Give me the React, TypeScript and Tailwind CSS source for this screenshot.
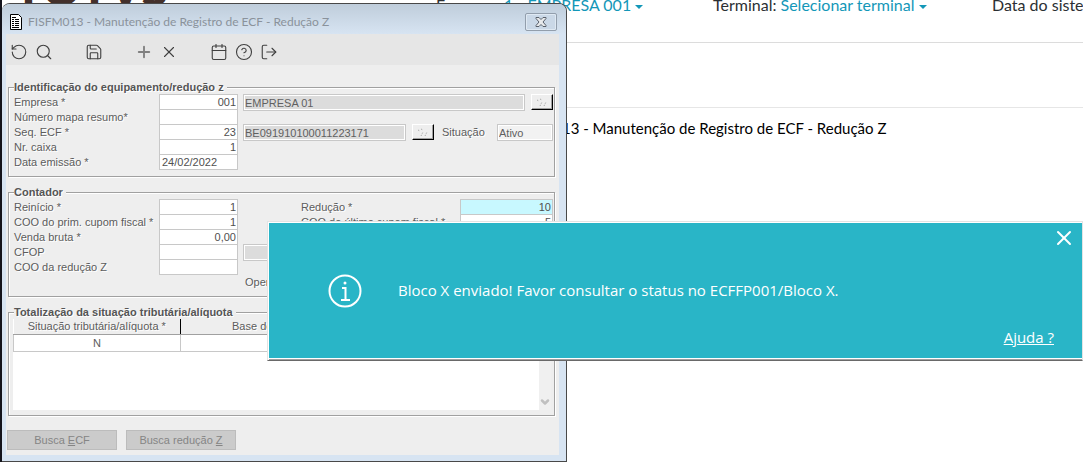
import { useState, type ReactNode } from "react";
import { Calendar, ChevronDown, CircleHelp, LogOut, Plus, RotateCcw, Save, Search, X } from "lucide-react";

const fieldClass =
  "block h-4 w-full border border-[#c8c8c8] pl-[2px] pr-px text-[11px] leading-[14px] text-[#505050] outline-none";

const displayClass =
  "block h-[17px] min-w-0 border border-[#c8c8c8] px-px text-[11px] leading-[15px] text-[#606060] outline outline-1 -outline-offset-2 outline-white";

const labelClass = "leading-4 [text-shadow:1px_1px_#fff]";

function Group({ title, children }: { title: string; children: ReactNode }) {
  return (
    <fieldset className="min-w-0 border border-[#a0a0a0] pr-px pl-[5px] shadow-[1px_1px_0_#fff,inset_1px_1px_0_#fff]">
      <legend className="bg-[#eee] pr-[3px] text-[11px] leading-[13px] font-bold text-[#555] [text-shadow:1px_1px_#fff]">
        {title}
      </legend>
      {children}
    </fieldset>
  );
}

type RowProps = {
  id: string;
  label: string;
  value?: string;
  align?: "left" | "right";
  children?: ReactNode;
};

function Row({ id, label, value = "", align = "right", children }: RowProps) {
  return (
    <div className="flex h-[15px] items-start">
      <label htmlFor={id} className={`w-[145px] shrink-0 ${labelClass}`}>
        {label}
      </label>
      <div className="w-[79px] shrink-0">
        <input id={id} defaultValue={value} className={`${fieldClass} bg-white ${align === "right" ? "text-right" : ""}`} />
      </div>
      {children}
    </div>
  );
}

function LookupButton({ label }: { label: string }) {
  return (
    <button
      type="button"
      aria-label={label}
      className="ml-[6px] grid h-4 w-[22px] shrink-0 place-items-center border border-t-white border-r-black border-b-black border-l-white bg-[#eee] shadow-[inset_-1px_-1px_0_#a0a0a0]"
    >
      <svg width="12" height="9" viewBox="0 0 12 9" stroke="#a0a0a0" fill="none" strokeDasharray="1 1">
        <path d="M1 2l2 1M4 1l2 1M4 8l2-4M8 8l2-4" />
      </svg>
    </button>
  );
}

function ToolButton({ label, gap = "", children }: { label: string; gap?: string; children: ReactNode }) {
  return (
    <button type="button" aria-label={label} className={`grid size-[25px] place-items-center ${gap}`}>
      {children}
    </button>
  );
}

function Toolbar() {
  const icon = { size: 18, strokeWidth: 1.5 };

  return (
    <div className="flex h-[31px] items-center bg-[#e6e6e6] pt-1 text-[#404040]">
      <ToolButton label="Desfazer"><RotateCcw {...icon} /></ToolButton>
      <ToolButton label="Pesquisar"><Search {...icon} /></ToolButton>
      <ToolButton label="Salvar" gap="ml-[25px]"><Save {...icon} /></ToolButton>
      <ToolButton label="Adicionar" gap="ml-[25px]"><Plus size={18} strokeWidth={2.5} className="text-[#808080]" /></ToolButton>
      <ToolButton label="Excluir"><X {...icon} /></ToolButton>
      <ToolButton label="Calendário" gap="ml-[25px]"><Calendar {...icon} /></ToolButton>
      <ToolButton label="Ajuda"><CircleHelp {...icon} /></ToolButton>
      <ToolButton label="Sair"><LogOut {...icon} /></ToolButton>
    </div>
  );
}

function RegistroWindow() {
  return (
    <section className="absolute top-[3px] left-0 w-[565px] overflow-hidden rounded-t-lg border border-l-0 border-[#484848] bg-[#d7e4f2] font-['Liberation_Sans',Arial,sans-serif] text-[11px] text-[#5c5c5c]">
      <header className="flex h-[30px] items-center bg-linear-to-b from-[#bfcddb] to-[#d7e4f2] pt-2 pr-[9px] pb-[2px] pl-2">
        <svg width="12" height="16" viewBox="0 0 12 16">
          <path d="M.5.5h8l3 3v12H.5z" fill="#fff" stroke="#000" />
          <path d="M2 3.5h4M2 5.5h2M5 5.5h4M2 7.5h2M5 7.5h4M2 9.5h2M5 9.5h4M2 11.5h2M5 11.5h4M2 13.5h7" stroke="#000" />
        </svg>
        <h1 className="ml-[6px] flex-1 font-['Lato',sans-serif] text-xs text-[#8a929b]">
          FISFM013 - Manutenção de Registro de ECF - Redução Z
        </h1>
        <button
          type="button"
          aria-label="Fechar"
          className="grid h-[18px] w-8 place-items-center rounded-xs border border-[#929eac] bg-[#cad8e7] shadow-[inset_0_0_0_1px_#dfe9f3]"
        >
          <svg width="12" height="10" viewBox="0 0 12 10">
            <path d="M1 .5h3l2 2 2-2h3v1L8 5l3 3.500v1H8l-2-2-2 2H1v-1L4 5 1 1.500z" fill="#e8eaec" stroke="#59606b" />
          </svg>
        </button>
      </header>

      <div className="mr-[7px] mb-[6px] ml-[4px] bg-[#eee]">
        <Toolbar />
        <div className="pt-4 pr-1 pb-[5px] pl-[2px]">
          <Group title="Identificação do equipamento/redução z">
            <div className="pb-[7px]">
              <Row id="empresa" label="Empresa *" value="001">
                <input aria-label="Nome da empresa" readOnly value="EMPRESA 01" className={`${displayClass} ml-[5px] flex-1 bg-[#dcdcdc]`} />
                <LookupButton label="Buscar empresa" />
              </Row>
              <Row id="mapa" label="Número mapa resumo*" />
              <Row id="seq" label="Seq. ECF *" value="23">
                <input aria-label="Número de série" readOnly value="BE091910100011223171" className={`${displayClass} ml-[5px] flex-1 bg-[#dcdcdc]`} />
                <LookupButton label="Buscar ECF" />
                <label htmlFor="situacao" className={`ml-2 w-[55px] ${labelClass}`}>
                  Situação
                </label>
                <input id="situacao" readOnly value="Ativo" className={`${displayClass} w-14 bg-[#f2f2f2]`} />
              </Row>
              <Row id="caixa" label="Nr. caixa" value="1" />
              <Row id="emissao" label="Data emissão *" value="24/02/2022" align="left" />
            </div>
          </Group>

          <div className="mt-[9px]">
            <Group title="Contador">
              <div className="pb-[7px]">
                <Row id="reinicio" label="Reinício *" value="1">
                  <label htmlFor="reducao" className={`ml-[63px] flex-1 ${labelClass}`}>
                    Redução *
                  </label>
                  <div className="w-[93px]">
                    <input id="reducao" defaultValue="10" className={`${fieldClass} bg-[#c8f8ff] text-right`} />
                  </div>
                </Row>
                <Row id="primcupom" label="COO do prim. cupom fiscal *" value="1">
                  <label htmlFor="ultcupom" className={`ml-[63px] flex-1 ${labelClass}`}>
                    COO do último cupom fiscal *
                  </label>
                  <div className="w-[93px]">
                    <input id="ultcupom" defaultValue="5" className={`${fieldClass} bg-white text-right`} />
                  </div>
                </Row>
                <Row id="venda" label="Venda bruta *" value="0,00" />
                <Row id="cfop" label="CFOP">
                  <input aria-label="Descrição do CFOP" readOnly className={`${displayClass} ml-[5px] flex-1 bg-[#dcdcdc]`} />
                </Row>
                <Row id="cooreducao" label="COO da redução Z" />
                <p className={`ml-[231px] h-[15px] ${labelClass}`}>Operador</p>
              </div>
            </Group>
          </div>

          <div className="mt-[9px]">
            <Group title="Totalização da situação tributária/alíquota">
              <div className="-ml-px mr-[2px] mb-[5px] flex h-[91px] bg-white">
                <div className="flex-1">
                  <table className="w-full table-fixed border-collapse">
                    <thead>
                      <tr className="h-[15px] bg-[#eee] leading-[14px] [text-shadow:1px_1px_#fff]">
                        <th className="w-[167px] border-r border-b border-r-black border-b-[#a0a0a0] p-0 font-normal">
                          Situação tributária/alíquota *
                        </th>
                        <th className="border-b border-[#a0a0a0] p-0 pl-[51px] text-left font-normal">Base de cálculo</th>
                      </tr>
                    </thead>
                    <tbody>
                      <tr className="h-4">
                        <td className="border border-[#c8c8c8] p-0 text-center">N</td>
                        <td className="border border-[#c8c8c8] p-0" />
                      </tr>
                    </tbody>
                  </table>
                </div>
                <div className="flex w-3 items-end justify-center bg-[#f0f0f0] pb-[2px] text-[#c0c0c0]">
                  <ChevronDown size={12} strokeWidth={5} />
                </div>
              </div>
            </Group>
          </div>

          <div className="-ml-px mt-[14px] flex gap-[9px] text-[#858585]">
            <button type="button" className="h-5 w-[110px] border border-[#bcbcbc] bg-[#cbcbcb]">
              Busca <u>E</u>CF
            </button>
            <button type="button" className="h-5 w-[110px] border border-[#bcbcbc] bg-[#cbcbcb]">
              Busca redução <u>Z</u>
            </button>
          </div>
        </div>
      </div>
    </section>
  );
}

function InfoMessage({ onClose }: { onClose: () => void }) {
  return (
    <div
      role="alert"
      className="absolute top-[221px] right-0 left-[265px] flex h-[140px] flex-col border border-[#e3e3e3] border-b-[#696969] bg-[#29b5c7] pr-7 pb-[13px] pl-[60px] font-['Open_Sans',sans-serif] text-[15px] text-white shadow-[inset_1px_1px_0_#fff,inset_0_-1px_0_#a0a0a0,inset_0_-2px_0_#fff]"
    >
      <button type="button" aria-label="Fechar mensagem" onClick={onClose} className="-mr-[22px] mt-1 self-end">
        <X size={24} strokeWidth={2} />
      </button>
      <div className="flex flex-1 items-center gap-9 pt-1">
        <svg width="34" height="34" viewBox="0 0 34 34" fill="none" stroke="#fff" strokeWidth="2">
          <circle cx="17" cy="17" r="15.500" />
          <path d="M14 14h3.500v12M13 26h9" />
          <circle cx="17" cy="9" r="1.500" fill="#fff" stroke="none" />
        </svg>
        <p>Bloco X enviado! Favor consultar o status no ECFFP001/Bloco X.</p>
      </div>
      <a href="#ajuda" className="self-end leading-5 underline">
        Ajuda ?
      </a>
    </div>
  );
}

function Caret() {
  return <span className="inline-block border-x-4 border-t-4 border-x-transparent align-middle" />;
}

export default function App() {
  const [showMessage, setShowMessage] = useState(true);

  return (
    <div className="relative h-screen overflow-hidden border-l-2 border-[#14141c] bg-white font-['Lato',sans-serif] text-base text-[#2b2f33]">
      <header className="flex h-[43px] items-start border-b border-[#dcdcdc] pl-3 whitespace-nowrap">
        <span className="-mt-[35px] w-[422px] shrink-0 text-5xl leading-[46px] font-black text-[#43302b]">TOTVS</span>
        <span className="-mt-[7px] w-[277px] shrink-0">
          Empresa: <a href="#empresa" className="text-[#1397b8]">1 - EMPRESA 001 <Caret /></a>
        </span>
        <span className="-mt-[7px] w-[279px] shrink-0">
          Terminal: <a href="#terminal" className="text-[#1397b8]">Selecionar terminal <Caret /></a>
        </span>
        <span className="-mt-[7px]">Data do sistema:</span>
      </header>
      <div className="h-[65px] border-b border-[#e6e6e6]" />
      <h2 className="pt-2 pl-[508px] text-[15px] leading-6 text-black">FISFM013 - Manutenção de Registro de ECF - Redução Z</h2>

      <RegistroWindow />
      {showMessage ? <InfoMessage onClose={() => setShowMessage(false)} /> : null}
    </div>
  );
}
